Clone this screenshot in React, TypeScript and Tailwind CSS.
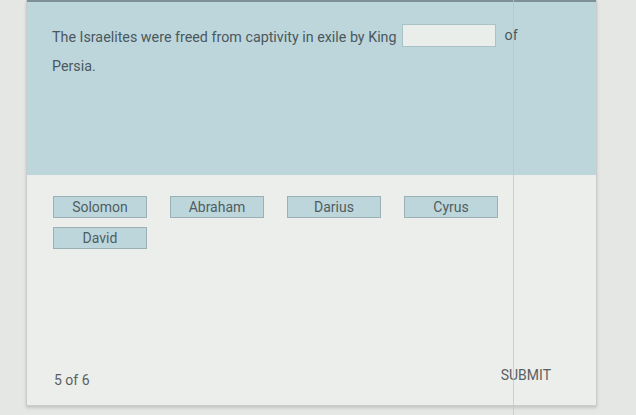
const choices = ['Solomon', 'Abraham', 'Darius', 'Cyrus', 'David'];

export default function App() {
  return (
    <div className="relative h-[415px] w-[636px] overflow-hidden bg-[#e5e7e4] font-['Roboto',sans-serif]">
      <div className="ml-[26px] w-[571px] border-x border-b border-[#c9cdca] bg-[#eceeeb] shadow-[0_2px_3px_rgba(0,0,0,0.15)]">
        <div className="h-[175px] border-t-2 border-[#7f9197] bg-[#bdd6dc] px-[25px] pt-[20px] text-[14.3px] text-[#4b585c]">
          <p className="flex items-center">
            <span className="mt-[5px]">The Israelites were freed from captivity in exile by King</span>
            <span className="mx-[5px] inline-block h-[23px] w-[94px] border border-[#a9c2c6] bg-[#e9eeeb]" />
            <span className="ml-[4px]">of</span>
          </p>
          <p className="mt-[8px]">Persia.</p>
        </div>
        <div className="flex h-[230px] flex-col px-[26px] pt-[21px]">
          <div className="grid w-[446px] grid-cols-4 gap-x-[22px] gap-y-[9px]">
            {choices.map((c) => (
              <div
                key={c}
                className="flex h-[22px] w-[94px] items-center justify-center border border-[#9bb0b4] bg-[#bdd6dc] text-[14px] text-[#4f5d61]"
              >
                {c}
              </div>
            ))}
          </div>
          <div className="mt-auto mb-[14px] flex items-end justify-between pr-[19px] text-[14px] text-[#5a6062]">
            <span className="pl-px">5 of 6</span>
            <span className="mb-[5px]">SUBMIT</span>
          </div>
        </div>
      </div>
      <div className="pointer-events-none absolute top-0 left-[513px] h-full w-px bg-[#c3bdd8]/70" />
    </div>
  );
}
